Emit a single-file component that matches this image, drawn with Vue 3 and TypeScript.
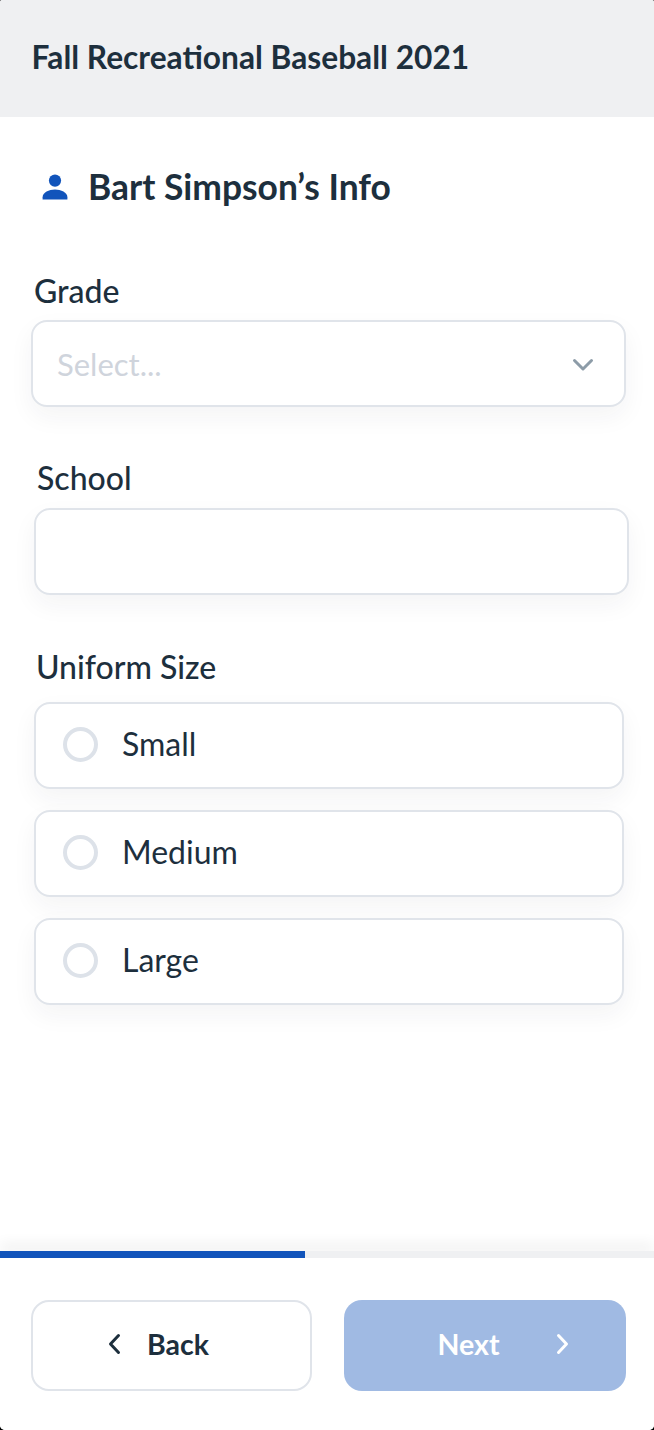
<script setup lang="ts">
const sizes: string[] = ['Small', 'Medium', 'Large']
</script>

<template>
  <div class="page">
    <header class="top">
      <h1 class="title">Fall Recreational Baseball 2021</h1>
    </header>

    <main class="content">
      <div class="heading">
        <svg class="person" viewBox="0 0 26 26" width="26" height="26">
          <circle cx="13" cy="6.6" r="6.1" fill="#1154bb" />
          <path d="M0.6 25.4v-2.2C0.6 18.6 7 15.6 13 15.6s12.4 3 12.4 7.6v2.2z" fill="#1154bb" />
        </svg>
        <h2 class="heading-text">Bart Simpson’s Info</h2>
      </div>

      <section class="grade">
        <div class="label">Grade</div>
        <div class="box select">
          <span class="placeholder">Select...</span>
          <svg class="chev" viewBox="0 0 22 14" width="22" height="14">
            <path d="M2.5 2.5 11 11l8.5-8.5" fill="none" stroke="#8d9ca8" stroke-width="3" stroke-linecap="round" stroke-linejoin="round" />
          </svg>
        </div>
      </section>

      <section class="school">
        <div class="label">School</div>
        <div class="box"></div>
      </section>

      <section class="uniform">
        <div class="label">Uniform Size</div>
        <div class="options">
          <div v-for="size in sizes" :key="size" class="box option">
            <span class="radio"></span>
            <span class="option-text">{{ size }}</span>
          </div>
        </div>
      </section>
    </main>

    <div class="progress"><div class="progress-fill"></div></div>

    <footer class="actions">
      <button class="btn back" type="button">
        <svg viewBox="0 0 14 22" width="14" height="22">
          <path d="M11.5 2.5 3.5 11l8 8.5" fill="none" stroke="#1d2f3d" stroke-width="3" stroke-linecap="round" stroke-linejoin="round" />
        </svg>
        <span>Back</span>
      </button>
      <button class="btn next" type="button">
        <span>Next</span>
        <svg viewBox="0 0 14 22" width="14" height="22">
          <path d="M2.5 2.5l8 8.5-8 8.5" fill="none" stroke="#fff" stroke-width="3" stroke-linecap="round" stroke-linejoin="round" />
        </svg>
      </button>
    </footer>
  </div>
</template>

<style>
html, body { margin: 0; padding: 0; background: #000; }
</style>

<style scoped>
.page {
  width: 654px;
  height: 1430px;
  display: flex;
  flex-direction: column;
  overflow: hidden;
  border-radius: 2px 2px 5px 5px;
  font-family: Lato, "Noto Sans", sans-serif;
  color: #1d2f3d;
  background: #fff;
}
.top {
  height: 117px;
  box-sizing: border-box;
  flex: none;
  display: flex;
  align-items: center;
  padding: 0 0 4px 31.5px;
  background: #eff0f2;
}
.title {
  margin: 0;
  font-size: 31.7px;
  font-weight: 700;
  line-height: 40px;
}
.content {
  flex: 1;
  display: flex;
  flex-direction: column;
}
.heading {
  display: flex;
  align-items: center;
  height: 44px;
  margin: 48px 0 0 42px;
  gap: 20px;
}
.person { flex: none; }
.heading-text {
  margin: 0;
  font-size: 35.4px;
  font-weight: 700;
  line-height: 44px;
}
.label {
  font-size: 32px;
  font-weight: 500;
  line-height: 36px;
  height: 36px;
}
.box {
  box-sizing: border-box;
  height: 87px;
  border: 2px solid #e0e4ea;
  border-radius: 16px;
  background: #fff;
  box-shadow: 0 10px 24px rgba(31, 45, 58, 0.05);
}
.grade { margin: 64px 28px 0 31px; }
.grade .label { padding-left: 3px; margin-bottom: 11px; }
.select {
  display: flex;
  align-items: center;
  justify-content: space-between;
  padding: 0 30px 0 24px;
}
.chev { margin-top: 3px; }
.placeholder {
  font-size: 31px;
  color: #cfd4dc;
}
.school { margin: 53px 25px 0 34px; }
.school .label { padding-left: 3px; margin-bottom: 12px; }
.uniform { margin: 54px 30px 0 34px; }
.uniform .label { padding-left: 2px; margin-bottom: 17px; }
.options {
  display: flex;
  flex-direction: column;
  gap: 21px;
}
.option {
  display: flex;
  align-items: center;
  padding: 0 0 3px 27px;
  gap: 24px;
}
.radio {
  box-sizing: border-box;
  width: 35px;
  height: 35px;
  border: 4px solid #dde2e9;
  border-radius: 50%;
  flex: none;
}
.option-text {
  font-size: 32px;
  line-height: 40px;
}
.progress {
  flex: none;
  height: 7px;
  background: #eff0f2;
  box-shadow: 0 -6px 14px rgba(0, 0, 0, 0.09);
  position: relative;
}
.progress-fill {
  width: 305px;
  height: 7px;
  background: #1154bb;
}
.actions {
  flex: none;
  height: 172px;
  box-sizing: border-box;
  padding: 42px 28px 0 31px;
  display: grid;
  grid-template-columns: 281px 282px;
  gap: 32px;
  align-items: start;
  background: #fff;
  position: relative;
}
.btn {
  box-sizing: border-box;
  height: 91px;
  border-radius: 18px;
  font-family: inherit;
  font-size: 28.5px;
  font-weight: 700;
  display: flex;
  align-items: center;
  padding: 0 0 4px;
}
.back {
  border: 2px solid #e0e4ea;
  background: #fff;
  color: #1d2f3d;
  gap: 26px;
  padding-left: 74px;
}
.next {
  border: none;
  background: #a0bae3;
  color: #fff;
  gap: 56px;
  padding-left: 93.5px;
}
</style>
